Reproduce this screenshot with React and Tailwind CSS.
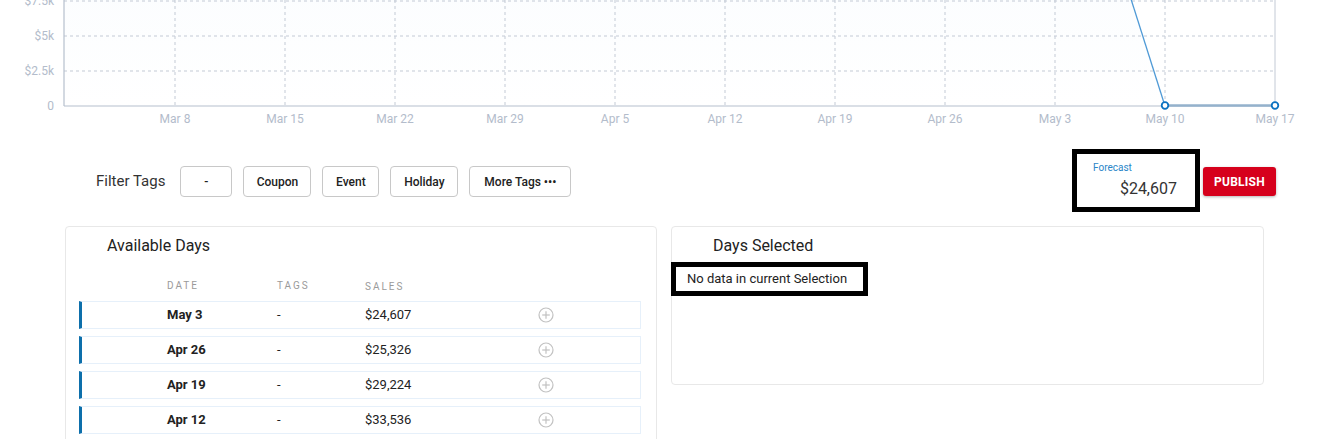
import React from "react";

const xLabels = ["Mar 8", "Mar 15", "Mar 22", "Mar 29", "Apr 5", "Apr 12", "Apr 19", "Apr 26", "May 3", "May 10", "May 17"];
const yLabels = [
  { t: "$7.5k", y: 1 },
  { t: "$5k", y: 36 },
  { t: "$2.5k", y: 71 },
  { t: "0", y: 106 },
];

function Chart() {
  const xs = xLabels.map((_, i) => 175 + i * 110);
  return (
    <svg width="1330" height="130" viewBox="0 0 1330 130" className="block">
      <defs>
        <linearGradient id="area" x1="0" y1="0" x2="0" y2="1">
          <stop offset="0" stopColor="#f2f8fd" />
          <stop offset="1" stopColor="#ffffff" />
        </linearGradient>
      </defs>
      <polygon points="64,-300 1055,-240 1165,106 64,106" fill="url(#area)" />
      {[1, 36, 71].map((y) => (
        <line key={y} x1="64" x2="1275" y1={y} y2={y} stroke="#c3cad5" strokeWidth="1" strokeDasharray="3 3" />
      ))}
      {xs.slice(0, 10).map((x) => (
        <line key={x} x1={x} x2={x} y1="0" y2="106" stroke="#c3cad5" strokeWidth="1" strokeDasharray="3 3" />
      ))}
      <line x1="1275" x2="1275" y1="0" y2="106" stroke="#c3cad5" strokeWidth="1" />
      <line x1="64" x2="64" y1="0" y2="106" stroke="#b6c0cd" strokeWidth="1.2" />
      <line x1="64" x2="1275" y1="106" y2="106" stroke="#b6c0cd" strokeWidth="1.2" />
      {yLabels.map((l) => (
        <text key={l.t} x="54" y={l.y + 4} textAnchor="end" fontSize="12" fill="#b3bccb" fontFamily="Roboto, sans-serif">
          {l.t}
        </text>
      ))}
      {xLabels.map((l, i) => (
        <text key={l} x={xs[i]} y="123" textAnchor="middle" fontSize="12" fill="#b3bccb" fontFamily="Roboto, sans-serif">
          {l}
        </text>
      ))}
      <polyline points="1055,-240 1165,106" fill="none" stroke="#4f9ad6" strokeWidth="1.3" />
      <line x1="1165" x2="1275" y1="105.5" y2="105.5" stroke="#94b2cc" strokeWidth="2.5" />
      <circle cx="1165" cy="105.5" r="3.3" fill="#fff" stroke="#0b72c1" strokeWidth="1.8" />
      <circle cx="1275" cy="105.5" r="3.3" fill="#fff" stroke="#0b72c1" strokeWidth="1.8" />
    </svg>
  );
}

function TagButton({ children, w }) {
  return (
    <button className={`h-[31px] ${w} rounded-[4px] border border-[#c8c8c8] bg-white text-[12px] font-medium text-[#222] flex items-center justify-center`}>
      {children}
    </button>
  );
}

function PlusCircle() {
  return (
    <svg width="16" height="16" viewBox="0 0 16 16">
      <circle cx="8" cy="8" r="7" fill="none" stroke="#c2c2c2" strokeWidth="1.2" />
      <line x1="8" y1="4.2" x2="8" y2="11.8" stroke="#c2c2c2" strokeWidth="1.2" />
      <line x1="4.2" y1="8" x2="11.8" y2="8" stroke="#c2c2c2" strokeWidth="1.2" />
    </svg>
  );
}

const rows = [
  { d: "May 3", s: "$24,607" },
  { d: "Apr 26", s: "$25,326" },
  { d: "Apr 19", s: "$29,224" },
  { d: "Apr 12", s: "$33,536" },
];

export default function App() {
  return (
    <div className="w-[1330px] h-[439px] overflow-hidden bg-white font-['Roboto',sans-serif] text-[#222]">
      <Chart />

      <div className="mt-[19px] h-[63px] flex items-center">
        <div className="ml-[96px] text-[15px] text-[#333] mr-[15px] mt-[1px]">Filter Tags</div>
        <div className="flex gap-[11px] mt-[2px]">
          <TagButton w="w-[52px]">-</TagButton>
          <TagButton w="w-[68px]">Coupon</TagButton>
          <TagButton w="w-[57px]">Event</TagButton>
          <TagButton w="w-[68px]">Holiday</TagButton>
          <TagButton w="w-[102px]">More Tags •••</TagButton>
        </div>
        <div className="ml-auto mr-[54px] flex items-center gap-[3px]">
          <div className="w-[128px] h-[63px] border-[5px] border-black bg-white flex flex-col pl-[16px] pr-[18px]">
            <div className="text-[10px] text-[#2a86c8] leading-none mt-[9px]">Forecast</div>
            <div className="text-[16px] text-[#333] leading-none text-right mt-[8px]">$24,607</div>
          </div>
          <button className="mt-[2px] w-[73px] h-[29px] rounded-[3px] bg-[#d6001c] text-white text-[12px] font-bold tracking-[0.02em] shadow-[0_1px_3px_rgba(0,0,0,0.3)]">
            PUBLISH
          </button>
        </div>
      </div>

      <div className="mt-[14px] ml-[65px] flex gap-[14px]">
        <div className="w-[592px] h-[230px] border border-[#e8e8e8] rounded-[4px] pl-[13px] pr-[15px]">
          <div className="pl-[28px] pt-[7px] text-[16px] text-[#222]">Available Days</div>
          <div className="mt-[20px] flex text-[10px] tracking-[0.2em] text-[#9a9a9a] pl-[88px] h-[14px] items-center">
            <div className="w-[110px]">DATE</div>
            <div className="w-[88px]">TAGS</div>
            <div className="mt-[2px]">SALES</div>
          </div>
          <div className="mt-[9px] flex flex-col gap-[7px]">
            {rows.map((r) => (
              <div key={r.d} className="h-[28px] flex items-center border border-[#e6f0fa] border-l-[3px] border-l-[#0d6fab] text-[13px] text-[#222]">
                <div className="pl-[85px] w-[195px] font-bold">{r.d}</div>
                <div className="w-[88px]">-</div>
                <div className="w-[173px]">{r.s}</div>
                <PlusCircle />
              </div>
            ))}
          </div>
        </div>

        <div className="w-[593px] h-[159px] border border-[#e8e8e8] rounded-[4px]">
          <div className="pl-[41px] pt-[7px] text-[16px] text-[#222]">Days Selected</div>
          <div className="-ml-px mt-[4px] w-[197px] h-[34px] border-[5px] border-black flex items-center pl-[11px] text-[13px] text-[#222]">
            No data in current Selection
          </div>
        </div>
      </div>
    </div>
  );
}
